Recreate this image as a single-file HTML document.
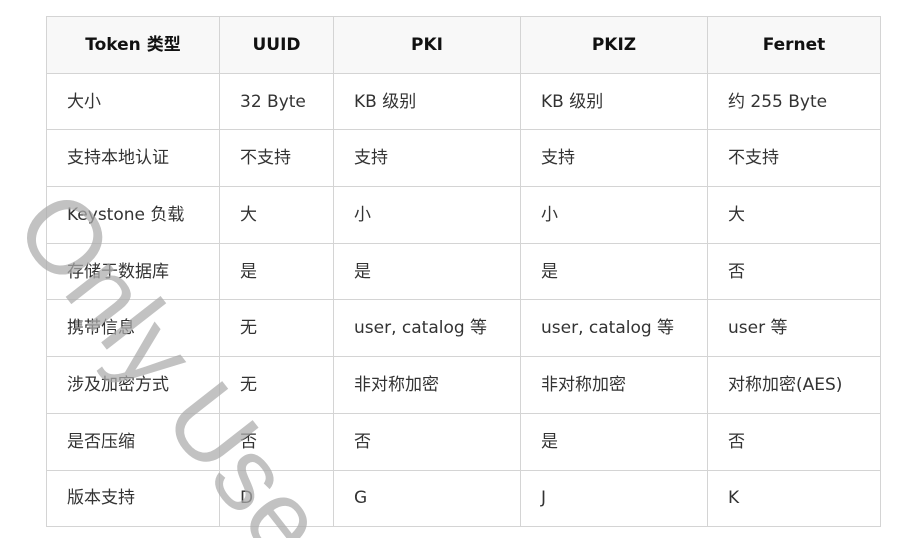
<!DOCTYPE html>
<html><head><meta charset="utf-8"><style>
html,body{margin:0;padding:0;background:#fff;width:916px;height:538px;overflow:hidden;position:relative}
table{position:absolute;left:46px;top:16px;border-collapse:collapse;table-layout:fixed;font-family:"DejaVu Sans","Noto Sans CJK SC",sans-serif;font-size:17px;color:#333}
tr{height:56.7px}
td,th{border:1.5px solid #d4d4d4;padding:0 0 0 20px;text-align:left;white-space:nowrap;vertical-align:middle;line-height:20px}
th{background:#f8f8f8;font-weight:bold;text-align:center;padding:0;color:#111}
.wm{position:absolute;left:80px;top:174px;font-family:"Liberation Sans",sans-serif;font-size:104px;color:rgba(170,170,170,0.72);transform:rotate(52deg);transform-origin:0 0;white-space:nowrap;line-height:1}
</style></head><body>
<table>
<colgroup><col style="width:173px"><col style="width:114px"><col style="width:187px"><col style="width:187px"><col style="width:173px"></colgroup>
<tr><th>Token 类型</th><th>UUID</th><th>PKI</th><th>PKIZ</th><th>Fernet</th></tr>
<tr><td>大小</td><td>32 Byte</td><td>KB 级别</td><td>KB 级别</td><td>约 255 Byte</td></tr>
<tr><td>支持本地认证</td><td>不支持</td><td>支持</td><td>支持</td><td>不支持</td></tr>
<tr><td>Keystone 负载</td><td>大</td><td>小</td><td>小</td><td>大</td></tr>
<tr><td>存储于数据库</td><td>是</td><td>是</td><td>是</td><td>否</td></tr>
<tr><td>携带信息</td><td>无</td><td>user, catalog 等</td><td>user, catalog 等</td><td>user 等</td></tr>
<tr><td>涉及加密方式</td><td>无</td><td>非对称加密</td><td>非对称加密</td><td>对称加密(AES)</td></tr>
<tr><td>是否压缩</td><td>否</td><td>否</td><td>是</td><td>否</td></tr>
<tr><td>版本支持</td><td>D</td><td>G</td><td>J</td><td>K</td></tr>
</table>
<div class="wm">Only Use</div>
</body></html>
